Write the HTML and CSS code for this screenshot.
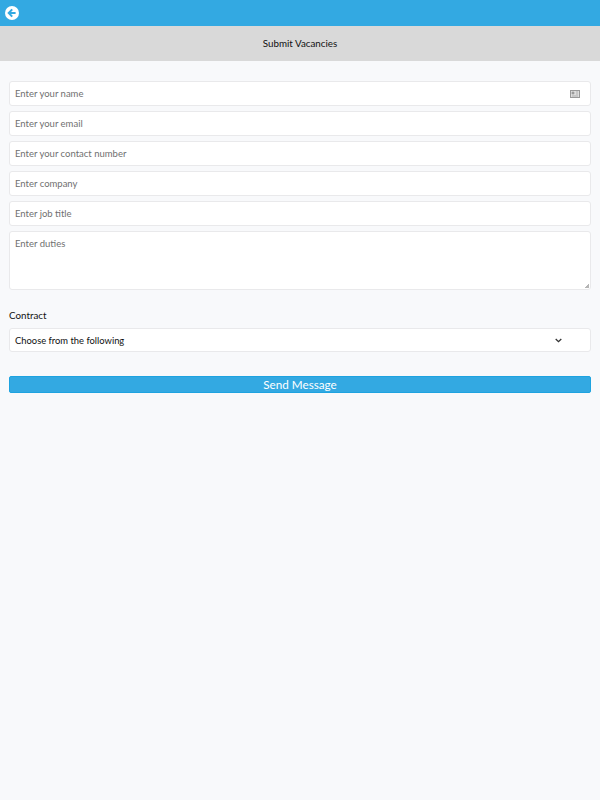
FILE: index.html
```html
<!DOCTYPE html>
<html>
<head>
    <title>Submit Vacancies</title>
    <link rel="stylesheet" href="styles.css">
</head>
<body>

    <div class="topbar">
        <svg class="back-icon" width="14" height="14" viewBox="0 0 14 14">
            <circle cx="7" cy="7" r="7" fill="#fff"/>
            <path d="M7.200 3.400 3.700 7l3.500 3.600M4 7h6.600" fill="none" stroke="#33a9e2" stroke-width="2"/>
        </svg>
    </div>

    <div class="titlebar">Submit Vacancies</div>

    <form class="form">
        <div class="field">
            <input class="input" type="text" placeholder="Enter your name">
            <svg class="card-icon" width="10" height="8" viewBox="0 0 10 8">
                <rect x="0.5" y="0.5" width="9" height="7" fill="#f4f4f4" stroke="#999"/>
                <rect x="1.500" y="1.500" width="3" height="3" fill="#999"/>
                <path d="M5.500 2h3M5.500 4h3M1.500 6h7" stroke="#999"/>
            </svg>
        </div>
        <input class="input" type="text" placeholder="Enter your email">
        <input class="input" type="text" placeholder="Enter your contact number">
        <input class="input" type="text" placeholder="Enter company">
        <input class="input" type="text" placeholder="Enter job title">
        <textarea class="input textarea" placeholder="Enter duties"></textarea>

        <label class="label">Contract</label>
        <div class="select">
            <span>Choose from the following</span>
            <svg class="chevron" width="7" height="5" viewBox="0 0 7 5">
                <path d="M.7 1 3.500 3.700 6.300 1" fill="none" stroke="#333" stroke-width="1.300"/>
            </svg>
        </div>

        <button class="submit" type="button">Send Message</button>
    </form>

</body>
</html>
```

FILE: styles.css
```css
body {
    margin: 0;
    min-height: 800px;
    background-color: #f8f9fb;
    font-family: Lato, sans-serif;
    color: #222;
}

.topbar {
    display: flex;
    align-items: center;
    height: 26px;
    padding-left: 4.500px;
    box-sizing: border-box;
    background-color: #33a9e2;
}

.titlebar {
    display: flex;
    justify-content: center;
    align-items: center;
    height: 35px;
    padding-bottom: 1px;
    box-sizing: border-box;
    background-color: #d9d9d9;
    font-size: 9.800px;
    color: #111;
}

.form {
    display: flex;
    flex-direction: column;
    gap: 5.500px;
    padding: 20px 9px 0;
}

.field {
    position: relative;
    display: flex;
}

.input {
    width: 100%;
    height: 24.500px;
    box-sizing: border-box;
    padding: 0 5px;
    border: 1px solid #e9e9eb;
    border-radius: 3px;
    background-color: white;
    font-family: Lato, sans-serif;
    font-size: 9.500px;
    color: #222;
}

.input::placeholder {
    color: #707070;
    opacity: 1;
}

.card-icon {
    position: absolute;
    top: 9px;
    right: 11.500px;
}

.textarea {
    display: block;
    height: 58.500px;
    padding-top: 6px;
    resize: vertical;
}

.textarea::-webkit-resizer {
    background: linear-gradient(135deg, transparent 50%, #b5b5b5 50%) no-repeat right 1px bottom 1px / 4px 4px;
}

.label {
    margin-top: 14px;
    font-size: 9.800px;
    line-height: 13px;
    color: #111;
}

.select {
    display: flex;
    justify-content: space-between;
    align-items: center;
    height: 24px;
    margin-top: 0.5px;
    box-sizing: border-box;
    padding: 0 28px 0 5px;
    border: 1px solid #e9e9eb;
    border-radius: 3px;
    background-color: white;
    font-size: 9.400px;
    color: #111;
}

.submit {
    height: 17.500px;
    margin-top: 18px;
    padding: 0;
    border: 1px solid #1ea3e0;
    border-radius: 2px;
    background-color: #33a9e2;
    font-family: Lato, sans-serif;
    font-size: 11.700px;
    color: white;
}
```
